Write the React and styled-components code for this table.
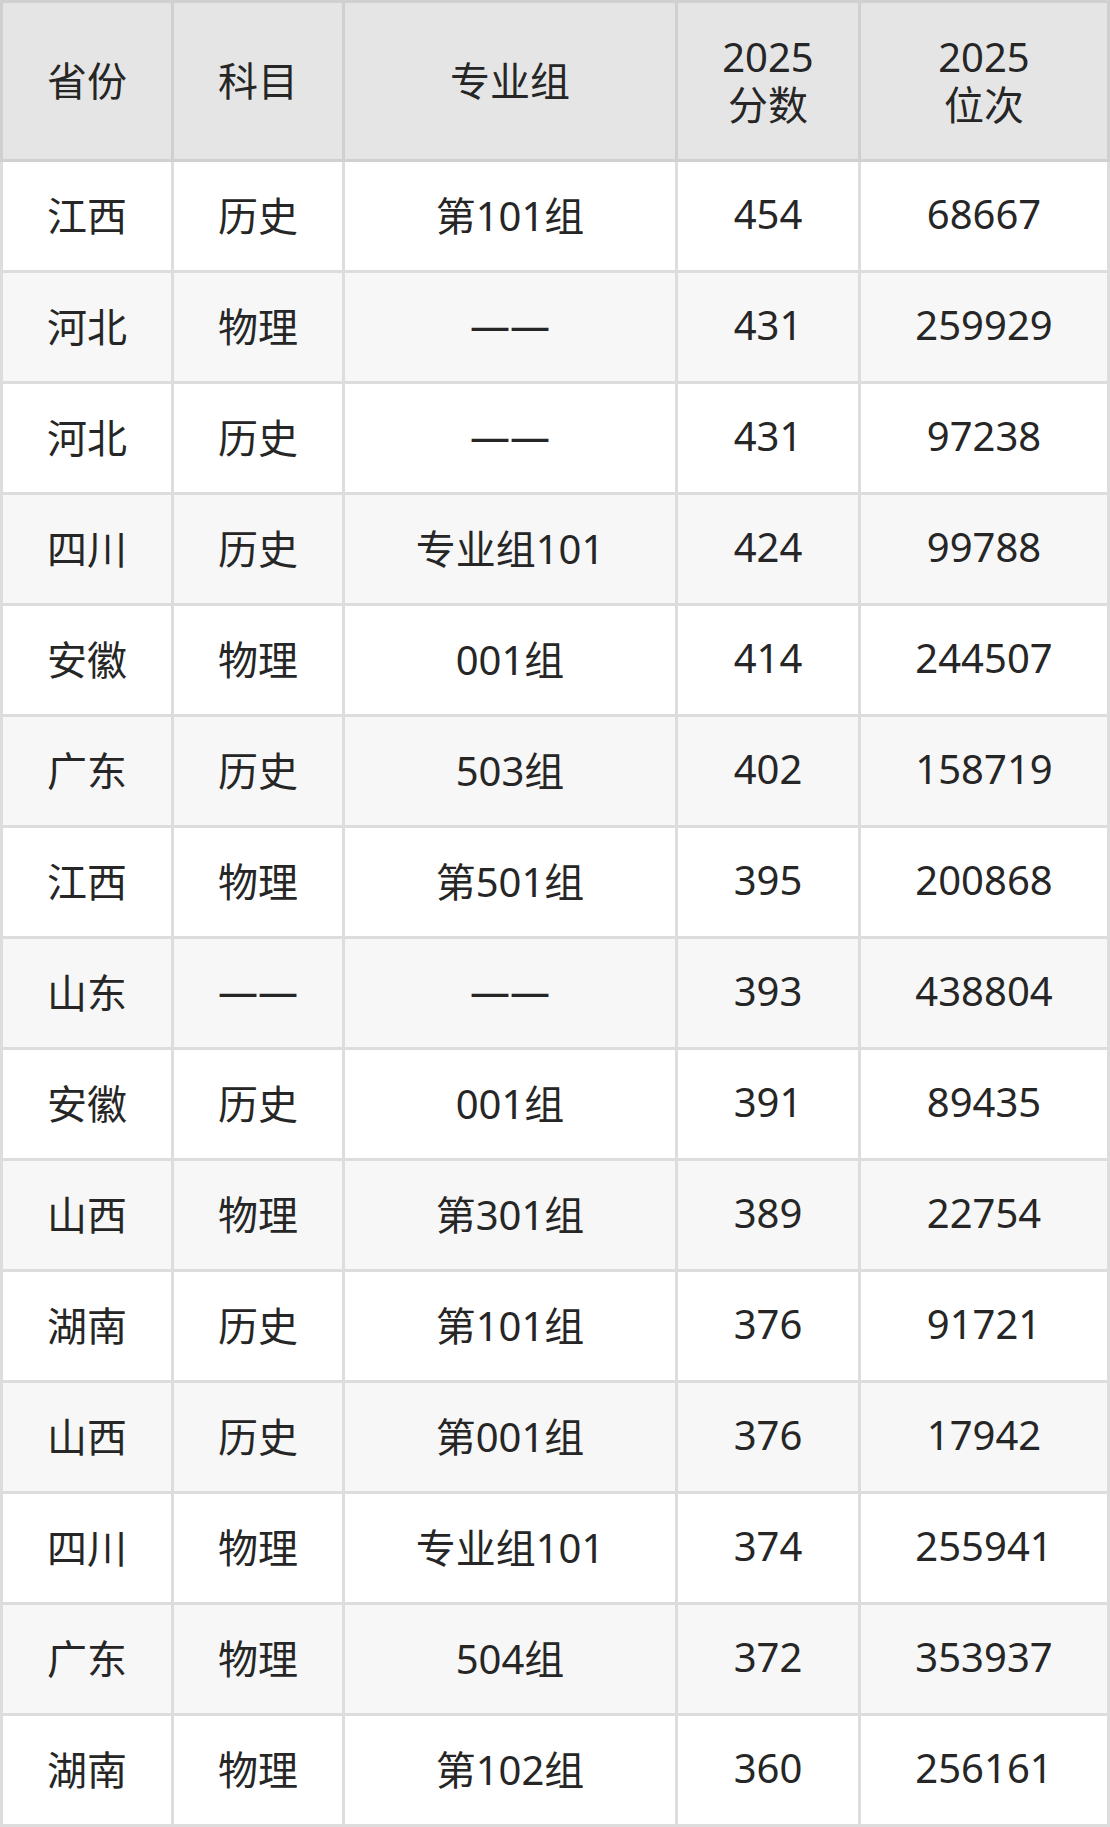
import React from "react";
import styled, { createGlobalStyle } from "styled-components";

const columns = "168px 168px 330px 180px 246px";

const rows = [
	["江西", "历史", "第101组", "454", "68667"],
	["河北", "物理", "——", "431", "259929"],
	["河北", "历史", "——", "431", "97238"],
	["四川", "历史", "专业组101", "424", "99788"],
	["安徽", "物理", "001组", "414", "244507"],
	["广东", "历史", "503组", "402", "158719"],
	["江西", "物理", "第501组", "395", "200868"],
	["山东", "——", "——", "393", "438804"],
	["安徽", "历史", "001组", "391", "89435"],
	["山西", "物理", "第301组", "389", "22754"],
	["湖南", "历史", "第101组", "376", "91721"],
	["山西", "历史", "第001组", "376", "17942"],
	["四川", "物理", "专业组101", "374", "255941"],
	["广东", "物理", "504组", "372", "353937"],
	["湖南", "物理", "第102组", "360", "256161"],
];

function App() {
	return (
		<>
			<GlobalStyle />
			<Table>
				<Head>
					<HeadCell>省份</HeadCell>
					<HeadCell>科目</HeadCell>
					<HeadCell>专业组</HeadCell>
					<HeadCell>
						2025
						<br />
						分数
					</HeadCell>
					<HeadCell>
						2025
						<br />
						位次
					</HeadCell>
				</Head>

				<Body>
					{rows.map((row, i) =>
						row.map((value, j) => (
							<Cell key={`${i}-${j}`} $striped={i % 2 === 1}>
								{value}
							</Cell>
						))
					)}
				</Body>
			</Table>
		</>
	);
}

export default App;

const GlobalStyle = createGlobalStyle`
	body {
		margin: 0;
		background: #fff;
		font-family: "Noto Sans", "Noto Sans CJK SC", sans-serif;
		color: #262626;
	}
`;

const Table = styled.div`
	width: 1110px;
	display: flex;
	flex-direction: column;
`;

const Head = styled.div`
	display: grid;
	grid-template-columns: ${columns};
	gap: 3px;
	padding: 3px;
	background-color: #d0d0d0;
`;

const HeadCell = styled.div`
	height: 156px;
	display: flex;
	align-items: center;
	justify-content: center;
	text-align: center;
	background-color: #e5e5e5;
	font-size: 40px;
	line-height: 48px;
`;

const Body = styled.div`
	display: grid;
	grid-template-columns: ${columns};
	gap: 3px;
	padding: 0 3px 3px;
	background-color: #dddddd;
`;

const Cell = styled.div`
	height: 108px;
	box-sizing: border-box;
	padding-bottom: 5px;
	display: flex;
	align-items: center;
	justify-content: center;
	background-color: ${(p) => (p.$striped ? "#f7f7f7" : "#fff")};
	font-size: 40px;
	white-space: nowrap;
`;
